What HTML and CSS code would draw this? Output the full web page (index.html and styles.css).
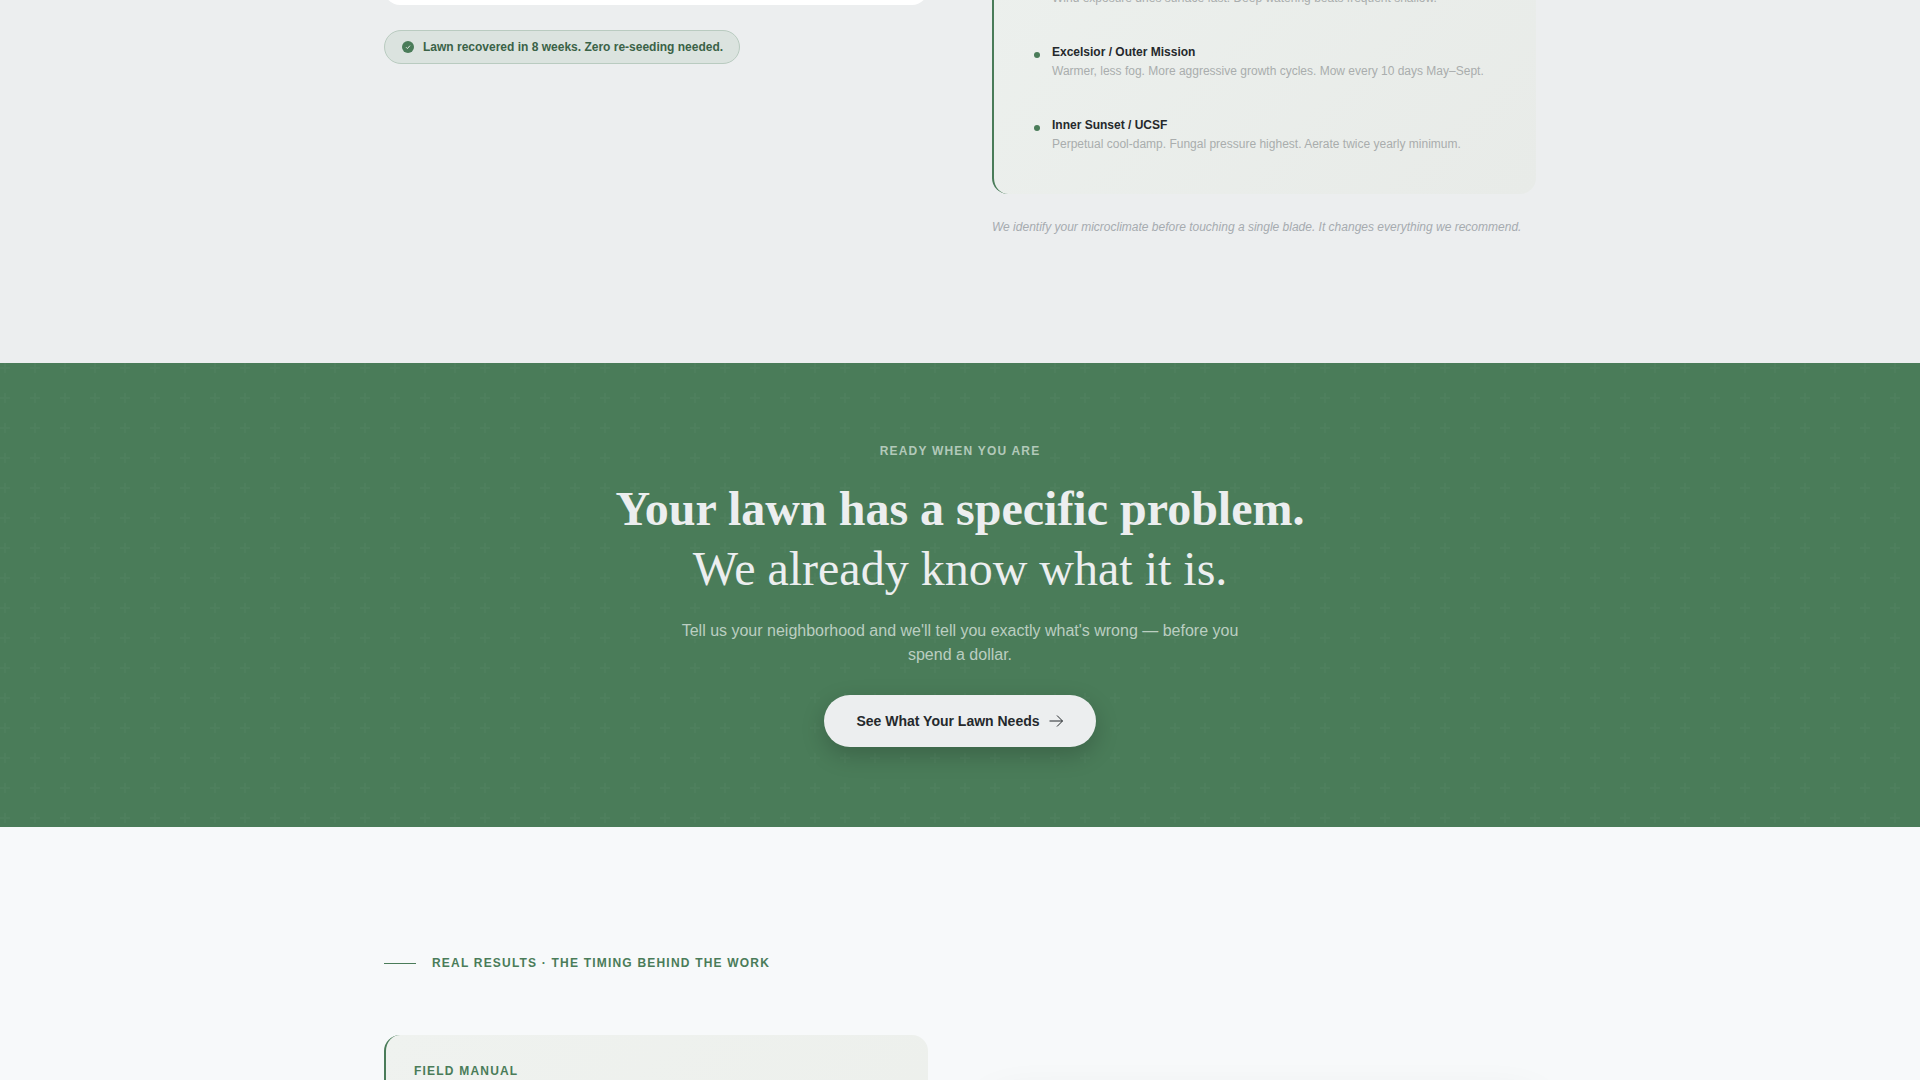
FILE: index.html
```html
<!DOCTYPE html>
<html lang="en">
<head>
    <meta charset="UTF-8">
    <meta name="viewport" content="width=device-width, initial-scale=1.0">
    <title>Lawn Care - San Francisco</title>
    <link rel="stylesheet" href="styles.css">
</head>
<body>

<!-- Microclimate -->
<section class="climate">
    <div class="container columns">
        <div>
            <div class="story-card"></div>
            <p class="badge">
                <svg width="14" height="14" viewBox="0 0 14 14" aria-hidden="true">
                    <circle cx="7" cy="7" r="6" fill="#4a7c59"/>
                    <path d="M5 7.2l1.4 1.4L9 5.6" fill="none" stroke="#dfe7e2" stroke-width="1"/>
                </svg>
                Lawn recovered in 8 weeks. Zero re-seeding needed.
            </p>
        </div>

        <div>
            <div class="field-card climate-card">
                <ul class="zones">
                    <li>
                        <p>Wind exposure dries surface fast. Deep watering beats frequent shallow.</p>
                    </li>
                    <li>
                        <h3>Excelsior / Outer Mission</h3>
                        <p>Warmer, less fog. More aggressive growth cycles. Mow every 10 days May–Sept.</p>
                    </li>
                    <li>
                        <h3>Inner Sunset / UCSF</h3>
                        <p>Perpetual cool-damp. Fungal pressure highest. Aerate twice yearly minimum.</p>
                    </li>
                </ul>
            </div>
            <p class="note">We identify your microclimate before touching a single blade. It changes everything we recommend.</p>
        </div>
    </div>
</section>

<!-- Call to action -->
<section class="cta">
    <svg class="cta-pattern" aria-hidden="true">
        <defs>
            <pattern id="plus" width="30" height="30" patternUnits="userSpaceOnUse">
                <path d="M6 4V0H4v4H0v2h4v4h2V6h4V4H6z" fill="#fff" fill-opacity="0.022"/>
            </pattern>
        </defs>
        <rect width="100%" height="100%" fill="url(#plus)"/>
    </svg>
    <div class="cta-inner">
        <p class="eyebrow cta-eyebrow">READY WHEN YOU ARE</p>
        <h2>Your lawn has a specific problem.<br><span>We already know what it is.</span></h2>
        <p class="cta-text">Tell us your neighborhood and we'll tell you exactly what's wrong — before you spend a dollar.</p>
        <button type="button" class="cta-button">
            See What Your Lawn Needs
            <svg width="16" height="16" viewBox="0 0 16 16" aria-hidden="true">
                <path d="M1.500 8h13M9 2.500L14.500 8L9 13.500" fill="none" stroke="currentColor" stroke-width="1"/>
            </svg>
        </button>
    </div>
</section>

<!-- Results -->
<section class="results">
    <div class="container">
        <p class="eyebrow results-eyebrow">REAL RESULTS · THE TIMING BEHIND THE WORK</p>
        <div class="columns">
            <div class="field-card manual-card">
                <p class="eyebrow">FIELD MANUAL</p>
            </div>
            <div class="photo-card"></div>
        </div>
    </div>
</section>

</body>
</html>
```
FILE: styles.css
```css
* {
    margin: 0;
    padding: 0;
    box-sizing: border-box;
}
body {
    font-family: "Liberation Sans", Arial, sans-serif;
    font-size: 12px;
    line-height: 19px;
    color: #25292c;
    background-color: #f7f9fa;
    height: 100vh;
    overflow: hidden;
}
.container {
    max-width: 1200px;
    margin: 0 auto;
    padding: 0 24px;
}
.columns {
    display: grid;
    grid-template-columns: 1fr 1fr;
    gap: 64px;
}
.eyebrow {
    font-weight: bold;
    line-height: 16px;
    letter-spacing: 0.1em;
    color: #4a7c59;
}
.field-card {
    border-left: 2px solid #4a7c59;
    border-radius: 16px;
    background: linear-gradient(135deg, #eff2ef, #ecefeb);
}

/* Microclimate */
.climate {
    background-color: #eceeef;
    padding-bottom: 126px;
    overflow: hidden;
}
.story-card {
    height: 65px;
    margin-top: -60px;
    margin-bottom: 25px;
    background-color: #fff;
    border-radius: 16px;
}
.badge {
    display: inline-flex;
    align-items: center;
    gap: 8px;
    padding: 7px 16px;
    line-height: 18px;
    font-weight: bold;
    color: #3a6247;
    background-color: #dbe3df;
    border: 1px solid #b9cbc0;
    border-radius: 17px;
}
.climate-card {
    margin-top: -51px;
    padding: 40px;
    background: linear-gradient(135deg, #ecf0ed, #e8ebe8);
}
.zones {
    list-style: none;
    display: grid;
    gap: 35px;
}
.zones li {
    position: relative;
    padding-left: 18px;
}
.zones li::before {
    content: "";
    position: absolute;
    left: 0;
    top: 9px;
    width: 6px;
    height: 6px;
    border-radius: 50%;
    background-color: #4a7c59;
}
.zones li:first-child::before {
    display: none;
}
.zones h3 {
    font-size: 12px;
}
.zones p {
    color: #a9adad;
}
.note {
    margin-top: 24px;
    font-style: italic;
    color: #a6abaf;
}

/* Call to action */
.cta {
    position: relative;
    padding: 80px 24px;
    background-color: #4a7c59;
    text-align: center;
}
.cta-pattern {
    position: absolute;
    inset: 0;
    width: 100%;
    height: 100%;
}
.cta-inner {
    position: relative;
    max-width: 768px;
    margin: 0 auto;
}
.cta-eyebrow {
    color: #b2c9b9;
    margin-bottom: 20px;
}
.cta h2 {
    font-family: "Liberation Serif", "Times New Roman", serif;
    font-size: 48px;
    line-height: 60px;
    color: #eceeef;
    margin-bottom: 20px;
}
.cta h2 span {
    font-weight: normal;
}
.cta-text {
    max-width: 576px;
    margin: 0 auto 28px;
    font-size: 16px;
    line-height: 24px;
    color: #bbcec1;
}
.cta-button {
    display: inline-flex;
    align-items: center;
    gap: 8px;
    height: 52px;
    padding: 0 32px;
    font-family: inherit;
    font-size: 14px;
    font-weight: bold;
    color: #25292c;
    background-color: #eceeef;
    border: none;
    border-radius: 26px;
    box-shadow: 0 8px 24px rgba(0, 0, 0, 0.2);
    cursor: pointer;
    vertical-align: top;
}

/* Results */
.results {
    padding: 128px 0;
}
.results-eyebrow {
    display: flex;
    align-items: center;
    gap: 16px;
    margin-bottom: 64px;
}
.results-eyebrow::before {
    content: "";
    width: 32px;
    height: 1px;
    background-color: #4a7c59;
}
.manual-card {
    min-height: 320px;
    padding: 28px;
}
.photo-card {
    min-height: 240px;
    margin-top: 64px;
    background-color: #fff;
    border-radius: 16px;
    box-shadow: 0 8px 48px rgba(0, 0, 0, 0.12);
}
```
